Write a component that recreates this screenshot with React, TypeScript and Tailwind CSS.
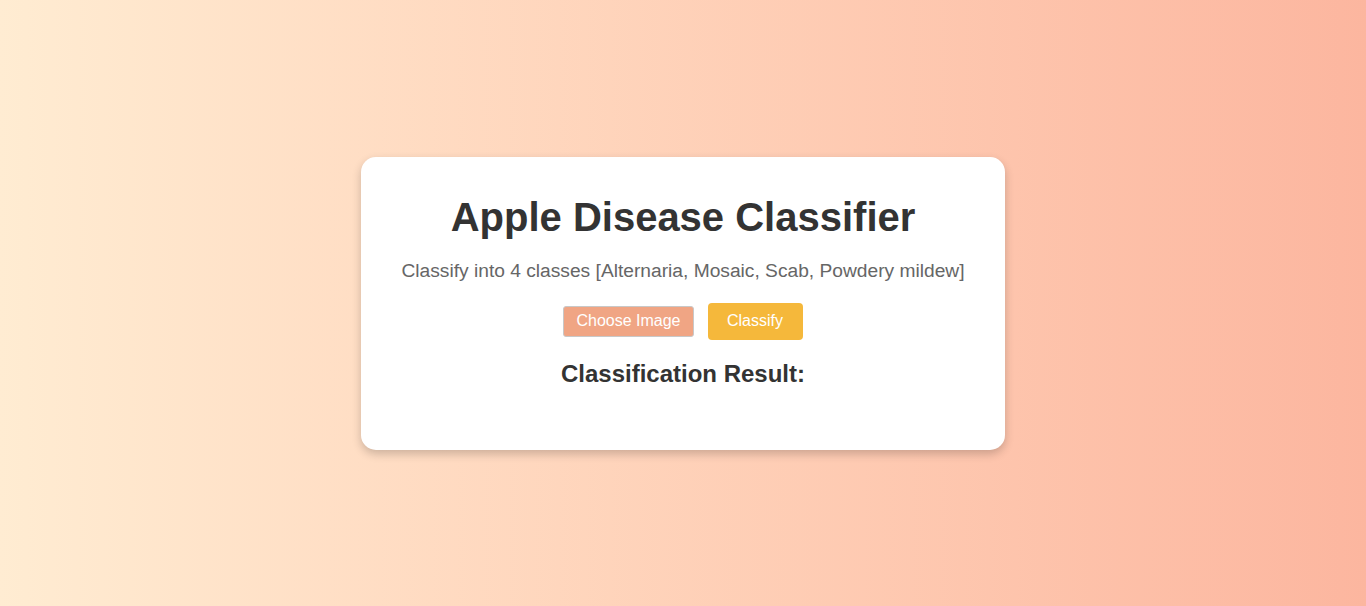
export default function App() {
  return (
    <div className="flex min-h-[606px] w-full items-center justify-center bg-gradient-to-r from-[#ffecd2] to-[#fcb69f] font-['Liberation_Sans',Arial,sans-serif]">
      <div className="flex flex-col items-center rounded-[15px] bg-white px-10 pt-[37px] pb-[62px] text-center shadow-[0_4px_10px_rgba(0,0,0,0.2)]">
        <h1 className="text-[40px] leading-[46px] font-bold text-[#333]">
          Apple Disease Classifier
        </h1>
        <p className="mt-[20px] text-[19.2px] leading-[22px] text-[#666]">
          Classify into 4 classes [Alternaria, Mosaic, Scab, Powdery mildew]
        </p>
        <div className="mt-[21px] flex items-center gap-[14px]">
          <button
            type="button"
            className="h-[31px] rounded-[3px] border border-[#c8c8c8] bg-[#f0a584] px-3 text-[16px] text-white"
          >
            Choose Image
          </button>
          <button
            type="button"
            className="h-[37px] w-[95px] rounded-[4px] bg-[#f5b83b] text-[16px] text-white"
          >
            Classify
          </button>
        </div>
        <h2 className="mt-[20px] text-[24px] leading-[28px] font-bold text-[#333]">
          Classification Result:
        </h2>
      </div>
    </div>
  );
}
